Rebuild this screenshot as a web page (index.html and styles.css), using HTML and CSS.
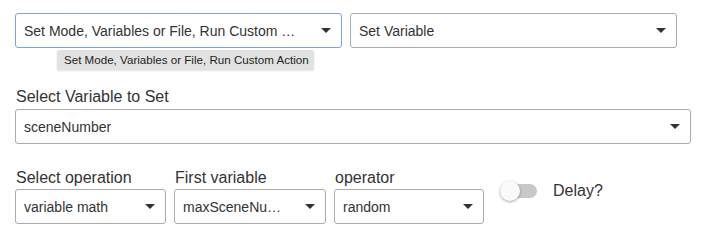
FILE: index.html
```html
<!DOCTYPE html>
<html lang="en">
<head>
    <meta charset="UTF-8">
    <title>Action Editor</title>
    <link rel="stylesheet" href="styles.css">
</head>
<body>
    <div class="editor">
        <div class="row top-row">
            <div class="select focused wide">
                <span class="select-text">Set Mode, Variables or File, Run Custom …</span>
                <span class="caret"></span>
            </div>
            <div class="select wide">
                <span class="select-text">Set Variable</span>
                <span class="caret"></span>
            </div>
            <div class="tooltip">Set Mode, Variables or File, Run Custom Action</div>
        </div>

        <div class="field full">
            <label class="field-label">Select Variable to Set</label>
            <div class="select">
                <span class="select-text">sceneNumber</span>
                <span class="caret"></span>
            </div>
        </div>

        <div class="row bottom-row">
            <div class="field small">
                <label class="field-label">Select operation</label>
                <div class="select">
                    <span class="select-text">variable math</span>
                    <span class="caret"></span>
                </div>
            </div>
            <div class="field small first-var">
                <label class="field-label">First variable</label>
                <div class="select">
                    <span class="select-text">maxSceneNu…</span>
                    <span class="caret"></span>
                </div>
            </div>
            <div class="field small op">
                <label class="field-label">operator</label>
                <div class="select">
                    <span class="select-text">random</span>
                    <span class="caret"></span>
                </div>
            </div>
            <div class="switch-group">
                <div class="switch">
                    <span class="switch-track"></span>
                    <span class="switch-thumb"></span>
                </div>
                <span class="switch-label">Delay?</span>
            </div>
        </div>
    </div>
</body>
</html>
```

FILE: styles.css
```css
* {
    margin: 0;
    padding: 0;
    box-sizing: border-box;
}

body {
    font-family: 'Liberation Sans', Arial, Helvetica, sans-serif;
    background: #fff;
    color: #333;
}

.editor {
    padding: 13px 0 0 15px;
}

.row {
    display: flex;
    gap: 8px;
}

.top-row {
    position: relative;
}

.select {
    height: 35px;
    border: 1px solid #ababab;
    border-radius: 3px;
    display: flex;
    align-items: center;
    justify-content: space-between;
    padding: 0 10px 0 8px;
    background: #fff;
    font-size: 14px;
    color: #333;
}

.select.focused {
    border-color: #7ba2ea;
}

.select.wide {
    width: 327px;
}

.select-text {
    white-space: nowrap;
    overflow: hidden;
}

.caret {
    width: 0;
    height: 0;
    border-left: 5px solid transparent;
    border-right: 5px solid transparent;
    border-top: 5px solid #333;
    flex-shrink: 0;
}

.tooltip {
    position: absolute;
    left: 42px;
    top: 37px;
    height: 20px;
    line-height: 20px;
    padding: 0 5px 0 7px;
    background: #e2e2e2;
    border-radius: 2px;
    font-size: 11.6px;
    color: #222;
    white-space: nowrap;
    box-shadow: 0 1px 2px rgba(0,0,0,0.12);
}

.field-label {
    display: block;
    font-size: 16px;
    line-height: 18px;
    margin: 0 0 3px 1px;
    color: #333;
}

.full {
    margin-top: 40px;
    width: 676px;
}

.bottom-row {
    margin-top: 25px;
    align-items: flex-start;
}

.bottom-row .field-label {
    margin-bottom: 2px;
}

.small {
    width: 151px;
}

.first-var {
    width: 152px;
}

.op {
    width: 150px;
}

.switch-group {
    display: flex;
    align-items: center;
    margin: 12px 0 0 8px;
    gap: 16px;
}

.switch {
    position: relative;
    width: 37px;
    height: 20px;
}

.switch-track {
    position: absolute;
    left: 0;
    top: 3px;
    width: 37px;
    height: 14px;
    border-radius: 7px;
    background: #c8c8c8;
}

.switch-thumb {
    position: absolute;
    left: 0;
    top: 0;
    width: 20px;
    height: 20px;
    border-radius: 50%;
    background: #fafafa;
    box-shadow: 0 1px 3px rgba(0,0,0,0.35);
}

.switch-label {
    font-size: 16px;
    color: #333;
}
```
